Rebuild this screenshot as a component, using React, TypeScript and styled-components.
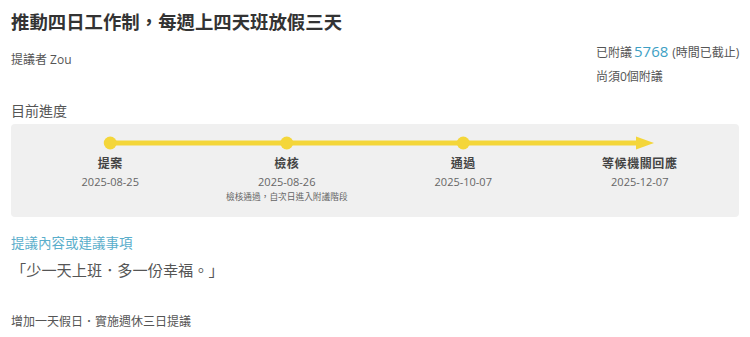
import React from "react";
import styled, { createGlobalStyle } from "styled-components";

const GlobalStyle = createGlobalStyle`
  body {
    margin: 0;
    background: #fff;
    font-family: "Open Sans", "Noto Sans CJK TC", sans-serif;
    color: #555;
  }
`;

const Page = styled.div`
  padding: 9px 11px 0 11px;
`;

const Title = styled.h1`
  margin: 0;
  font-size: 18.4px;
  line-height: 24px;
  font-weight: 700;
  color: #333;
  font-family: "Noto Sans CJK TC", sans-serif;
`;

const MetaRow = styled.div`
  display: flex;
  justify-content: space-between;
  margin-top: 6px;
`;

const Proposer = styled.div`
  padding-top: 12px;
  font-size: 12px;
  line-height: 18px;
  color: #555;
`;

const Stats = styled.div`
  width: 143px;
  font-size: 12px;
  color: #555;
`;

const StatLine = styled.div`
  line-height: 24px;
  white-space: nowrap;
`;

const Count = styled.span`
  color: #3d9fc4;
  font-size: 15px;
  margin: 0 4px 0 2px;
`;

const SectionLabel = styled.div<{ $accent?: boolean }>`
  margin-top: ${(p) => (p.$accent ? "16px" : "12px")};
  font-size: ${(p) => (p.$accent ? "13.5px" : "14px")};
  line-height: 20px;
  color: ${(p) => (p.$accent ? "#5aaecb" : "#555")};
`;

const ProgressBox = styled.div`
  margin-top: 3px;
  background: #f0f0f0;
  border-radius: 4px;
  padding: 9px 11px 13px 11px;
`;

const Track = styled.svg`
  display: block;
  width: 100%;
  height: 20px;
`;

const Steps = styled.div`
  display: grid;
  grid-template-columns: repeat(4, 1fr);
  margin-top: 2px;
`;

const Step = styled.div`
  display: flex;
  flex-direction: column;
  align-items: center;
  text-align: center;
`;

const StepName = styled.div`
  font-size: 12px;
  line-height: 18px;
  font-weight: 700;
  color: #444;
  letter-spacing: 0.6px;
`;

const StepDate = styled.div`
  font-size: 11px;
  line-height: 17px;
  color: #666;
`;

const StepNote = styled.div`
  font-size: 8.7px;
  line-height: 14px;
  color: #666;
`;

const Quote = styled.div`
  margin-top: 5px;
  font-size: 15.2px;
  line-height: 24px;
  color: #555;
`;

const Body = styled.div`
  margin-top: 31px;
  font-size: 12px;
  line-height: 18px;
  color: #555;
`;

const YELLOW = "#f4d63a";

const steps = [
  { name: "提案", date: "2025-08-25" },
  { name: "檢核", date: "2025-08-26", note: "檢核通過，自次日進入附議階段" },
  { name: "通過", date: "2025-10-07" },
  { name: "等候機關回應", date: "2025-12-07" },
];

function ProgressTrack() {
  const w = 706;
  const col = w / 4;
  const centers = [0, 1, 2].map((i) => col * i + col / 2);
  return (
    <Track viewBox={`0 0 ${w} 20`} preserveAspectRatio="none">
      <line x1={centers[0]} y1={10} x2={616} y2={10} stroke={YELLOW} strokeWidth={5} />
      <polygon points="614,3.5 632,10 614,16.5" fill={YELLOW} />
      {centers.map((c) => (
        <circle key={c} cx={c} cy={10} r={6.5} fill={YELLOW} />
      ))}
    </Track>
  );
}

export default function App() {
  return (
    <>
      <GlobalStyle />
      <Page>
        <Title>推動四日工作制，每週上四天班放假三天</Title>
        <MetaRow>
          <Proposer>提議者 Zou</Proposer>
          <Stats>
            <StatLine>
              已附議<Count>5768</Count>(時間已截止)
            </StatLine>
            <StatLine>尚須0個附議</StatLine>
          </Stats>
        </MetaRow>
        <SectionLabel>目前進度</SectionLabel>
        <ProgressBox>
          <ProgressTrack />
          <Steps>
            {steps.map((s) => (
              <Step key={s.name}>
                <StepName>{s.name}</StepName>
                <StepDate>{s.date}</StepDate>
                {s.note && <StepNote>{s.note}</StepNote>}
              </Step>
            ))}
          </Steps>
        </ProgressBox>
        <SectionLabel $accent>提議內容或建議事項</SectionLabel>
        <Quote>「少一天上班．多一份幸福。」</Quote>
        <Body>增加一天假日．實施週休三日提議</Body>
      </Page>
    </>
  );
}
